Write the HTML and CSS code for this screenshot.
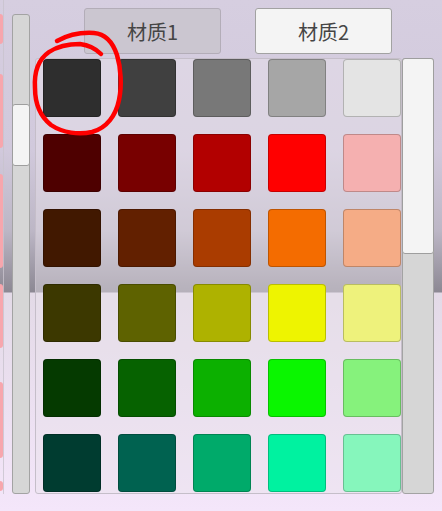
FILE: index.html
```html
<!DOCTYPE html>
<html lang="zh-CN">
<head>
    <meta charset="UTF-8">
    <meta name="viewport" content="width=device-width, initial-scale=1.0">
    <title>材质颜色</title>
    <link rel="stylesheet" href="styles.css">
</head>
<body>
    <div class="app">
        <div class="edge">
            <span class="edge-piece p1"></span>
            <span class="edge-piece p2"></span>
            <span class="edge-piece p3"></span>
            <span class="edge-piece p4"></span>
            <span class="edge-piece p5"></span>
            <span class="edge-piece p6"></span>
        </div>

        <div class="vscroll left-scroll">
            <div class="thumb"></div>
        </div>

        <div class="main">
            <div class="tabs">
                <button class="tab">材质1</button>
                <button class="tab active">材质2</button>
            </div>

            <div class="picker">
                <div class="panel">
                    <div class="grid" id="grid"></div>
                </div>
                <div class="vscroll right-scroll">
                    <div class="thumb"></div>
                </div>
            </div>
        </div>

        <!-- hand drawn mark over the first swatch -->
        <svg class="mark" width="150" height="150" viewBox="0 0 150 150">
            <path d="M57 41 C66 36 78 32 94 33 C106 34 113 43 117 55 C121 68 122 86 119 100 C116 115 107 128 92 132 C79 135 63 133 51 125 C41 117 35 104 35 88 C34 72 39 59 49 52 C58 46 70 44 80 44 C88 45 95 48 101 54" />
        </svg>
    </div>

    <script>
        const colors = [
            '#2e2e2e', '#404040', '#787878', '#a6a6a6', '#e4e4e4',
            '#4e0000', '#780000', '#b20000', '#ff0000', '#f5b0b0',
            '#411800', '#622000', '#aa3c00', '#f46c00', '#f5ac86',
            '#3c3800', '#5e6200', '#aeb200', '#eef400', '#eef27c',
            '#053a00', '#066200', '#0cb000', '#0af600', '#86f27c',
            '#003c30', '#006250', '#00aa6a', '#00f2a0', '#86f6bc'
        ];

        const grid = document.getElementById('grid');

        colors.forEach(c => {
            const sw = document.createElement('div');
            sw.className = 'swatch';
            sw.style.background = c;
            grid.appendChild(sw);
        });
    </script>
</body>
</html>
```

FILE: styles.css
```css
* {
    margin: 0;
    padding: 0;
    box-sizing: border-box;
}

body {
    width: 442px;
    height: 511px;
    overflow: hidden;
    font-family: "Noto Sans CJK SC", "Noto Sans", sans-serif;
    background: linear-gradient(180deg,
        #d6cee0 0px,
        #d1c9dc 150px,
        #bdb7c6 230px,
        #8c8893 292px,
        #e3dae7 293px,
        #f4e6fa 511px);
}

.app {
    position: relative;
    display: flex;
    height: 511px;
}

/* partly visible buttons off the left side */
.edge {
    width: 4px;
    padding-top: 14px;
    display: flex;
    flex-direction: column;
    border-right: 1px solid rgba(200, 195, 205, 0.8);
    height: 494px;
}

.edge-piece {
    display: block;
    width: 3px;
    background: #f7a6ad;
    border-radius: 0 3px 3px 0;
}

.p1 { height: 30px; }
.p2 { height: 74px; margin-top: 30px; }
.p3 { height: 94px; margin-top: 26px; }
.p4 { height: 64px; margin-top: 16px; }
.p5 { height: 76px; margin-top: 34px; }
.p6 { height: 10px; margin-top: 23px; }

.vscroll {
    background: #d6d6d6;
    border: 1px solid #a3a3a3;
    border-radius: 3px;
    display: flex;
    flex-direction: column;
}

.vscroll .thumb {
    background: #f4f4f4;
    border: 1px solid #9e9e9e;
    border-radius: 3px;
    margin: -1px;
}

.left-scroll {
    width: 18px;
    height: 480px;
    margin-top: 14px;
    margin-left: 8px;
    padding-top: 90px;
}

.left-scroll .thumb {
    height: 62px;
}

.main {
    margin-left: 5px;
    padding-top: 8px;
}

.tabs {
    display: flex;
    gap: 34px;
    padding-left: 49px;
    margin-bottom: 4px;
}

.tab {
    width: 137px;
    height: 46px;
    border-radius: 3px;
    font-family: "Noto Sans CJK SC", "Noto Sans", sans-serif;
    font-size: 20px;
    color: #454545;
    background: #cbc6d0;
    border: 1px solid #b3adb8;
}

.tab.active {
    background: #f4f4f4;
    border-color: #a2a2a2;
}

.picker {
    display: flex;
}

.panel {
    width: 367px;
    height: 436px;
    background: rgba(232, 226, 234, 0.45);
    border: 1px solid #c5bec9;
    border-radius: 3px;
    overflow: hidden;
    padding-left: 7px;
}

.grid {
    display: grid;
    grid-template-columns: repeat(5, 58px);
    grid-auto-rows: 58px;
    gap: 17px;
}

.swatch {
    border-radius: 4px;
    box-shadow: inset 0 0 0 1px rgba(0, 0, 0, 0.22);
}

.right-scroll {
    width: 32px;
    height: 436px;
}

.right-scroll .thumb {
    height: 196px;
}

.mark {
    position: absolute;
    left: 0;
    top: 0;
    pointer-events: none;
}

.mark path {
    fill: none;
    stroke: #ff0000;
    stroke-width: 4.5;
    stroke-linecap: round;
}
```
